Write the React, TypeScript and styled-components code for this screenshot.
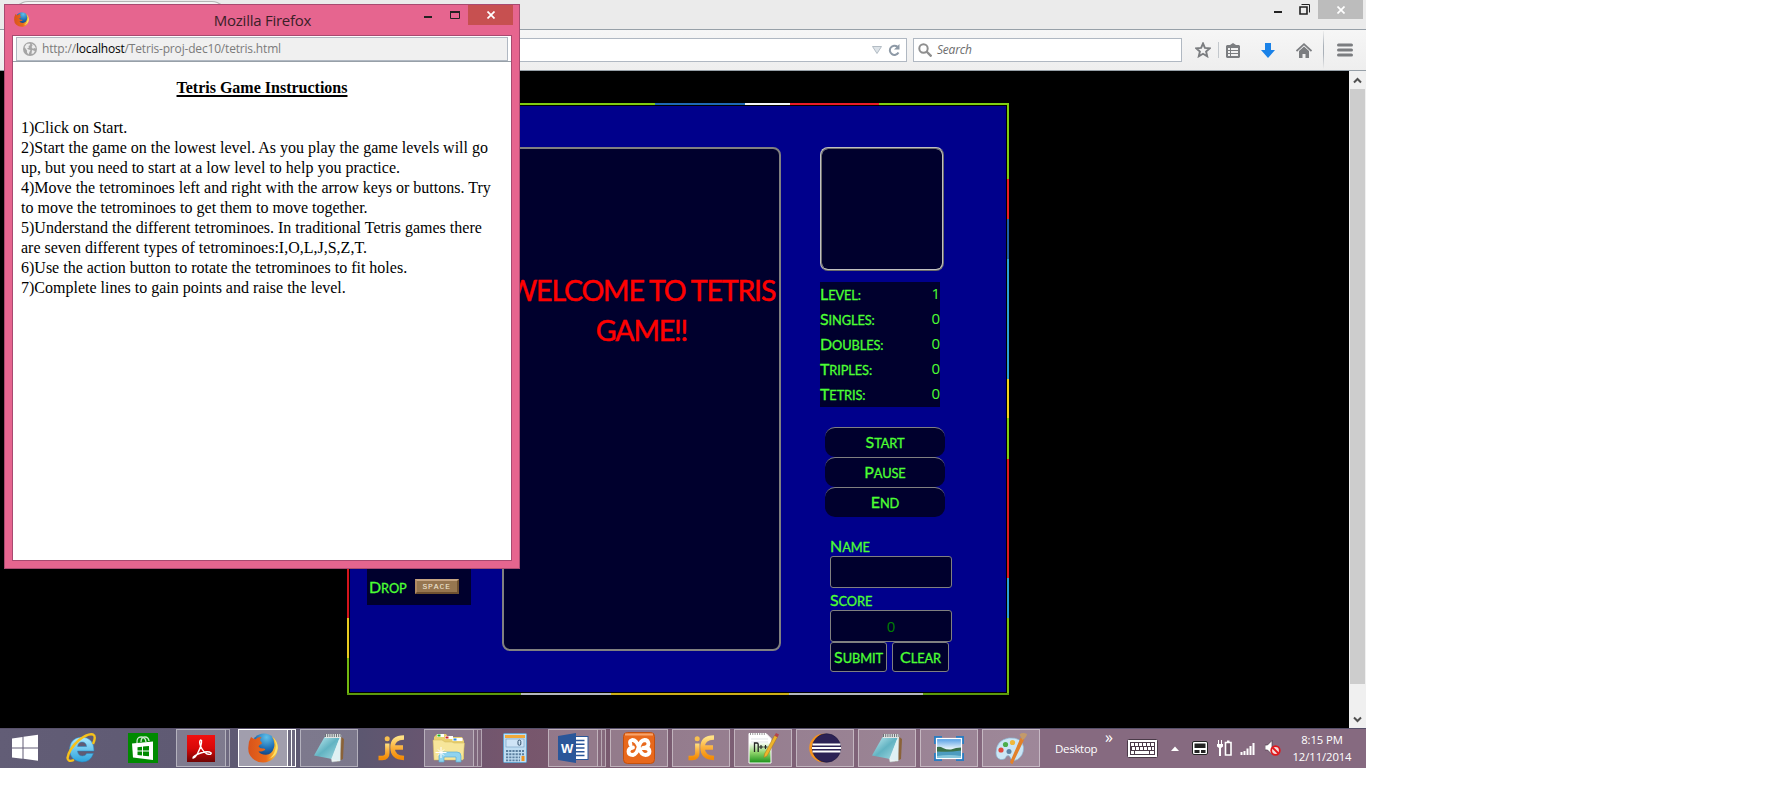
import React from "react";
import styled, { createGlobalStyle, css } from "styled-components";

const ui = `"Open Sans", "Noto Sans", sans-serif`;
const game = `Lato, "Open Sans", sans-serif`;
const navy = "#00008b";
const night = "#00002d";
const lime = "#4dff33";

const Global = createGlobalStyle`
  * { box-sizing: border-box; }
  html, body { margin: 0; background: #fff; overflow: hidden; }
  svg { display: block; flex: none; }
`;

const Screen = styled.div`
  position: relative;
  width: 1366px;
  height: 768px;
  display: flex;
  flex-direction: column;
  overflow: hidden;
  font-family: ${ui};
`;

/* ---------- browser chrome ---------- */
const TabStrip = styled.div`
  height: 30px;
  background: #ebebeb;
  border-bottom: 1px solid #97a0a8;
  display: flex;
  justify-content: space-between;
  flex: none;
`;
const Tab = styled.div`
  width: 212px;
  height: 29px;
  margin: 1px 0 0 14px;
  border: 1px solid #b4b4b4;
  border-bottom: 0;
  border-radius: 14px 14px 0 0;
  background: #f4f4f4;
`;
const Captions = styled.div`
  display: flex;
  height: 19px;
  margin-right: 3px;
`;
const CloseBox = styled.div<{ $live?: boolean }>`
  width: 45px;
  height: ${(p) => (p.$live ? 20 : 19)}px;
  background: ${(p) => (p.$live ? "#c75050" : "#bcbcbc")};
  display: flex;
  align-items: center;
  justify-content: center;
`;
const Toolbar = styled.div`
  height: 41px;
  flex: none;
  background: linear-gradient(#f6f6f6, #eeeeee);
  border-bottom: 1px solid #97a0a8;
  display: flex;
  align-items: center;
  padding-left: 40px;
`;
const Field = styled.div<{ $w: number }>`
  width: ${(p) => p.$w}px;
  height: 24px;
  margin-right: 6px;
  padding-left: 4px;
  border: 1px solid #b0b8c2;
  background: #fff;
  display: flex;
  align-items: center;
`;
const UrlIcons = styled.div`
  margin-left: auto;
  display: flex;
  align-items: center;
  gap: 6px;
  padding-right: 6px;
`;
const SearchHint = styled.span`
  font: italic 12px/22px ${ui};
  letter-spacing: -0.2px;
  color: #6d6d6d;
  margin-left: 5px;
`;
const Tools = styled.div`
  display: flex;
  align-items: center;
  margin-left: 7px;
  height: 100%;
`;
const Divider = styled.div<{ $h: number }>`
  width: 1px;
  height: ${(p) => p.$h}px;
  background: ${(p) => (p.$h > 20 ? "linear-gradient(#eee, #a9b0b8 40%, #a9b0b8 60%, #eee)" : "#c3c8cd")};
`;
const Slot = styled.div<{ $w: number; $top?: number }>`
  width: ${(p) => p.$w}px;
  padding-top: ${(p) => p.$top ?? 0}px;
  display: flex;
  justify-content: center;
`;

/* ---------- page ---------- */
const Viewport = styled.div`
  display: flex;
  height: 657px;
  flex: none;
  background: #000;
`;
const Page = styled.div`
  flex: 1;
  padding: 32px 0 0 347px;
`;
const Scrollbar = styled.div`
  width: 17px;
  background: #f0f0f0;
  display: flex;
  flex-direction: column;
  align-items: center;
`;
const Arrow = styled.div`
  height: 18px;
  display: flex;
  align-items: center;
`;
const Thumb = styled.div`
  width: 15px;
  height: 595px;
  background: #cdcdcd;
  margin-bottom: 26px;
`;

const Frame = styled.div`
  width: 662px;
  height: 592px;
  padding: 2px;
  background-repeat: no-repeat;
  background-image:
    linear-gradient(90deg, #80cc10 308px, #1e6ab5 308px 398px, #f4f6f6 398px 443px, #ec1c24 443px 532px, #80d010 532px),
    linear-gradient(90deg, #5c9a0c 174px, #b4b8bc 174px 264px, #ccae18 264px 442px, #b4b8bc 442px 576px, #5c9a0c 576px),
    linear-gradient(#80cc10 400px, #d4141c 400px 515px, #e8cc20 515px 555px, #72b810 555px),
    linear-gradient(#80cc10 76px, #ec1c24 76px 116px, #1e5fa5 116px 156px, #2a9fd6 156px 276px, #f2d21c 276px 315px, #80cc10 315px 356px, #e01820 356px 475px, #2a9fd6 475px 515px, #76be10 515px);
  background-size: 662px 2px, 662px 2px, 2px 592px, 2px 592px;
  background-position: 0 0, 0 590px, 0 0, 660px 0;
`;
const GameBox = styled.div`
  height: 588px;
  border: 1px solid #000;
  background: ${navy};
  display: flex;
  padding-top: 41px;
`;
const KeysColumn = styled.div`
  width: 152px;
  padding: 398px 0 0 17px;
`;
const KeysPanel = styled.div`
  width: 104px;
  height: 60px;
  padding: 30px 0 0 2px;
  background: ${night};
  display: flex;
  gap: 8px;
`;
const SpaceKey = styled.div`
  width: 44px;
  height: 15px;
  margin-top: 4px;
  border: 2px solid;
  border-color: #c6a582 #6f5130 #6f5130 #b08a62;
  background: #967650;
  color: #f3ead9;
  font: 8px/11px "Liberation Mono", monospace;
  letter-spacing: 0.9px;
  text-align: center;
`;
const Board = styled.div`
  width: 279px;
  height: 504px;
  border: 2px solid #808080;
  border-radius: 8px;
  background: ${night};
  padding-top: 121px;
  text-align: center;
`;
const Welcome = styled.div`
  color: #f00;
  font: 28.5px/40px ${game};
  letter-spacing: -1.15px;
  -webkit-text-stroke: 0.5px #f00;
  white-space: nowrap;
`;
const Side = styled.div`
  margin-left: 39px;
  width: 140px;
`;
const Preview = styled.div`
  width: 124px;
  height: 124px;
  border: 2px ridge #c0c0c0;
  border-radius: 8px;
  background: ${night};
`;
const Stats = styled.div`
  width: 120px;
  margin-top: 11px;
  background: ${night};
`;
const Stat = styled.div`
  height: 25px;
  display: flex;
  justify-content: space-between;
  color: ${lime};
  font: 15px/22px ${ui};
`;
const SmallCaps = styled.span`
  display: inline-block;
  font: 12.8px/23px ${game};
  color: ${lime};
  text-transform: uppercase;
  letter-spacing: -0.1px;
  -webkit-text-stroke: 0.3px ${lime};
  &::first-letter { font-size: 16px; }
`;
const Actions = styled.div`
  margin: 20px 0 0 5px;
  width: 120px;
`;
const button = css`
  display: flex;
  justify-content: center;
  height: 30px;
  background: ${night};
`;
const ActionButton = styled.div`
  ${button}
  border-top: 1px solid #808080;
  border-radius: 10px;
  padding-top: 2px;
`;
const Form = styled.div`
  margin: 17px 0 0 10px;
  width: 122px;
`;
const Label = styled.div`
  display: flex;
  align-items: flex-start;
  height: 22px;
`;
const Input = styled.div`
  height: 32px;
  border: 1px solid #808080;
  border-radius: 3px;
  background: ${night};
  color: #008000;
  font: 15px/31px ${ui};
  text-align: center;
`;
const FormButtons = styled.div`
  display: flex;
  gap: 5px;
`;
const FormButton = styled.div`
  ${button}
  width: 57px;
  border: 1px solid #808080;
  border-radius: 3px;
  padding-top: 2px;
`;

/* ---------- popup ---------- */
const Popup = styled.div`
  position: absolute;
  left: 4px;
  top: 4px;
  width: 516px;
  height: 565px;
  border: 1px solid #a84a70;
  background: #e6658f;
  padding: 0 7px 7px;
  display: flex;
  flex-direction: column;
`;
const TitleBar = styled.div`
  height: 30px;
  display: grid;
  grid-template-columns: 118px 1fr 118px;
  margin-right: -1px;
`;
const AppIcon = styled.div`
  padding: 7px 0 0 2px;
`;
const Title = styled.div`
  text-align: center;
  font: 15px/30px ${ui};
  color: #3a2028;
  letter-spacing: -0.25px;
`;
const PopCaptions = styled.div`
  display: flex;
  justify-content: flex-end;
`;
const PopBody = styled.div`
  flex: 1;
  border: 1px solid #a84a70;
  background: #fff;
`;
const PopUrlRow = styled.div`
  height: 26px;
  padding: 1px 3px 0;
  border-bottom: 1px solid #97a0a8;
`;
const PopUrl = styled.div`
  height: 24px;
  background: #f0f0f0;
  border: 1px solid #b0b8c2;
  display: flex;
  align-items: center;
  gap: 5px;
  padding-left: 6px;
  font: 12px/22px ${ui};
  letter-spacing: -0.18px;
  color: #7b7b7b;
  white-space: pre;
  b { font-weight: 400; color: #000; }
`;
const Instructions = styled.div`
  padding: 16px 8px 0;
  font: 16px/20px "Liberation Serif", serif;
  color: #000;
  white-space: nowrap;
`;
const Heading = styled.div`
  text-align: center;
  font-weight: bold;
  text-decoration: underline;
  text-decoration-thickness: 2px;
  text-underline-offset: 2px;
  margin-bottom: 20px;
`;

/* ---------- taskbar ---------- */
const Taskbar = styled.div`
  height: 40px;
  flex: none;
  display: flex;
  background: linear-gradient(90deg, #625d76 0, #5c5770 360px, #6a5570 440px, #77566c 520px, #795b70 640px, #866a80 1040px, #866a80 1366px);
  box-shadow: inset 0 1px #57506a;
`;
const StartSlot = styled.div`
  width: 52px;
  padding: 6px 0 0 11px;
`;
const TaskSlot = styled.div`
  width: 62px;
  display: flex;
  padding: 1px 4px 1px 0;
`;
const TaskFrame = styled.div<{ $on?: boolean; $bare?: boolean; $stack?: boolean }>`
  width: ${(p) => (p.$stack ? 50 : 58)}px;
  height: 38px;
  display: flex;
  align-items: center;
  justify-content: center;
  ${(p) =>
    !p.$bare &&
    css`
      border: 1px solid ${p.$on ? "#fff" : "rgba(255,255,255,.42)"};
      background: ${p.$on ? "rgba(255,255,255,.42)" : "rgba(255,255,255,.2)"};
    `}
`;
const StackEdge = styled.div<{ $on?: boolean }>`
  width: 4px;
  height: 38px;
  border: 1px solid ${(p) => (p.$on ? "#fff" : "rgba(255,255,255,.42)")};
  border-left: 0;
  background: rgba(255, 255, 255, 0.1);
`;
const Tray = styled.div`
  display: flex;
  align-items: center;
  color: #fff;
  font: 11.3px/17px ${ui};
  flex: 1;
  padding-left: 11px;
`;
const DesktopLabel = styled.div`
  width: 46px;
  font-size: 11.5px;
  letter-spacing: -0.3px;
`;
const More = styled.div`
  width: 26px;
  height: 38px;
  padding-left: 4px;
  font-size: 16px;
  line-height: 16px;
`;
const TrayItem = styled.div<{ $w: number }>`
  width: ${(p) => p.$w}px;
  flex: none;
`;
const Clock = styled.div`
  width: 72px;
  flex: none;
  text-align: center;
  letter-spacing: -0.1px;
`;

/* ---------- drawings ---------- */
const Minimize = ({ w = 8 }: { w?: number }) => (
  <svg width={w} height="3"><rect width={w} height="2" fill="#222" /></svg>
);
const Cross = () => (
  <svg width="8" height="8" viewBox="0 0 8 8"><path d="M.5 .5l7 7M7.5 .5l-7 7" stroke="#fff" strokeWidth="1.7" /></svg>
);
const Firefox = ({ s }: { s: number }) => (
  <svg width={s} height={s} viewBox="0 0 30 30">
    <defs>
      <radialGradient id="ffb" cx=".6" cy=".15" r=".9"><stop offset="0" stopColor="#5fc0ea" /><stop offset=".5" stopColor="#1f6fb5" /><stop offset="1" stopColor="#0b2660" /></radialGradient>
      <linearGradient id="ffo" x1="0" x2="1"><stop offset="0" stopColor="#d9531a" /><stop offset=".6" stopColor="#e8691c" /><stop offset="1" stopColor="#fbd53a" /></linearGradient>
    </defs>
    <circle cx="16" cy="13" r="12.5" fill="url(#ffb)" />
    <path d="M3 4Q0 9 .3 16A14.7 13.5 0 0 0 15 29.6C24 29.6 30 22.5 29.7 14 29.4 9 27 5.500 24 3.500Q27.500 9 26 14.500 24 21.500 18 21.800 12 21.800 10.500 18 13 19.200 16 17.600 18.500 16.300 16 15.400 12 16 10.500 13.500 11 11.500 13.500 11 14.500 9.200 12.300 8 11.500 6 13.500 4Q9.500 3.800 7.500 6.300 5 6 3 4Z" fill="url(#ffo)" />
    <path d="M24 3.500Q29.500 9 27.500 16 26 23 20 26.500 29 23 29.700 15 29.600 8 24 3.500Z" fill="#fde36a" />
  </svg>
);
const Globe = () => (
  <svg width="14" height="14" viewBox="0 0 14 14">
    <circle cx="7" cy="7" r="7" fill="#a5a5a5" />
    <path d="M1.500 5l2-3 3-.5 1 1.500-2 1 .5 1.500-2 1 1.500 1 2 .5-1 2-1 2.500-1.500-2 0-2zM8.500 1.500l3 2 1.500 3-2-.5-1 1-1.500-2 1-1.500zM9 8l3 1-1.500 2.500-2 .5z" fill="#ececec" />
  </svg>
);
const Windows = () => (
  <svg width="28" height="28" viewBox="0 0 28 28" fill="#fff">
    <path d="M1 4.500L11.500 3v10.400H1zM12.500 2.800L27 .8v12.600H12.500zM1 14.400h10.500v10.400L1 23.400zM12.500 14.400H27v12.400l-14.500-2z" />
  </svg>
);
const Explorer = () => (
  <svg width="32" height="32" viewBox="0 0 32 32">
    <defs><linearGradient id="ie" x2="0" y2="1"><stop stopColor="#aeeaff" /><stop offset="1" stopColor="#2ba3dd" /></linearGradient></defs>
    <path d="M29 19H12.500q.6 5 5 5 3 0 4.200-2.500h6.700Q25.500 30 17 30 5 29 4.500 17.500 5 6 16.500 5 29 5.500 29 19zM12.600 14.500h9q-.5-4.500-4.600-4.500-3.800 0-4.400 4.500z" fill="url(#ie)" stroke="#2389c4" strokeWidth=".5" />
    <path d="M28 12Q31.500 4 28 2.500 23 1 14 8 4 17 2.500 26q.3 4.500 6.500 2" fill="none" stroke="#f6c21c" strokeWidth="2.400" />
  </svg>
);
const Store = () => (
  <svg width="30" height="30" viewBox="0 0 30 30">
    <rect width="30" height="30" fill="#008a00" />
    <path d="M9 10Q8.500 4 13 4t5 5M13 9q0-5 4-5 3.500 0 4 4" fill="none" stroke="#cfe8cf" strokeWidth="1.300" />
    <path d="M4 10.500L25 8.500V27L5 24.500z" fill="#fff" />
    <path d="M9.500 14.200l4.500-.5v3.800H9.500zM15 13.600l6-.6v4.500h-6zM9.500 18.500H14v4l-4.500-.4zM15 18.500h6v4.800l-6-.6z" fill="#008a00" />
  </svg>
);
const Acrobat = () => (
  <svg width="28" height="27" viewBox="0 0 28 27">
    <defs><linearGradient id="ac" x2="0" y2="1"><stop stopColor="#f11010" /><stop offset=".5" stopColor="#d80808" /><stop offset="1" stopColor="#6f0404" /></linearGradient></defs>
    <rect width="28" height="27" fill="url(#ac)" />
    <path d="M13.500 5q-1.800 1.500.2 6.500 2.500 5.500 6.500 7.500 4.500 1 4-1-3-2.500-10.500 0Q6 21 6 23q1.800.4 4.500-4.500Q15 10 14.500 5.500z" fill="none" stroke="#fff" strokeWidth="1.400" />
  </svg>
);
const Notepad = () => (
  <svg width="32" height="30" viewBox="0 0 32 30">
    <defs><linearGradient id="np" x2="1" y2="1"><stop stopColor="#c8eff4" /><stop offset=".5" stopColor="#62b3c2" /><stop offset="1" stopColor="#a4dbe3" /></linearGradient></defs>
    <path d="M27 3l4 3-1 20-6 3z" fill="#8a6238" />
    <path d="M12 2h16l-1 26-8 1z" fill="#eef4f4" stroke="#b9c6c8" strokeWidth=".5" />
    <path d="M11.500 4H27L19 26 1 22.500z" fill="url(#np)" />
    <path d="M26.500 5l.8 23-9-2z" fill="#dff1f3" />
    <path d="M12 3h16" stroke="#dfe3e3" strokeWidth="4" />
    <path d="M12 2.500h16" stroke="#6a7073" strokeWidth="3" strokeDasharray="1 1.200" />
  </svg>
);
const JEdit = () => (
  <svg width="28" height="28" viewBox="0 0 28 28">
    <defs><linearGradient id="je" x2="0" y2="1"><stop stopColor="#ffe184" /><stop offset=".5" stopColor="#fbb03b" /><stop offset="1" stopColor="#f48c06" /></linearGradient></defs>
    <g fill="none" stroke="url(#je)" strokeWidth="4.400">
      <path d="M10.300 9.500V19q0 5-5 5H1.500" />
      <path d="M27 3.500q-11.500 0-11.500 10T27 24M14 13.500h12" />
    </g>
    <circle cx="10.200" cy="4.800" r="2.500" fill="#f8c050" />
  </svg>
);
const Folders = () => (
  <svg width="34" height="30" viewBox="0 0 34 30">
    <path d="M2 4L5 1h9l2 3h14l2 4v18H2z" fill="#e9cf6e" />
    <rect x="5" y="1" width="7" height="3" fill="#fff" /><rect x="5.500" y="1.500" width="3" height="2" fill="#1db21d" />
    <rect x="13" y="3" width="8" height="3" fill="#fff" /><rect x="13.500" y="3.500" width="3" height="2" fill="#d02a2a" />
    <rect x="20.500" y="5" width="10" height="3" fill="#fff" /><rect x="21.500" y="5.500" width="3" height="2" fill="#2a8ae0" />
    <path d="M1 7h9l3 2h7l2 1h10.500L31 27H2z" fill="#f7e69a" stroke="#cdb45a" strokeWidth=".5" />
    <path d="M7 29v-6q0-4 4-4h14q4 0 4 4v6h-5v-5H12v5z" fill="#8fd3ee" stroke="#5aaed2" strokeWidth=".7" />
    <path d="M9 14v11M3.500 19.500h11M6 16.500l6 6M12 16.500l-6 6" stroke="#fff" strokeWidth="1" />
  </svg>
);
const Calculator = () => (
  <svg width="24" height="30" viewBox="0 0 24 30">
    <rect x=".5" y=".5" width="23" height="29" rx="1" fill="#c0ddf2" stroke="#65a3cf" />
    <rect x="2" y="2" width="20" height="3" fill="#f0a93a" />
    <rect x="3" y="6" width="18" height="8" fill="#cfe4f6" stroke="#6f99c0" strokeWidth=".6" />
    <rect x="15" y="7.200" width="2.800" height="5" rx="1.200" fill="none" stroke="#36536e" />
    <path d="M3 18h18M3 21.200h18M3 24.400h14M3 27.400h14" stroke="#5b7f9f" strokeWidth="1.900" strokeDasharray="2.200 1" />
    <rect x="18.500" y="23" width="3" height="5" fill="#f0941e" />
  </svg>
);
const WordGlyph = styled.text`
  font: bold 13px "Liberation Sans", sans-serif;
  fill: #fff;
`;
const Word = () => (
  <svg width="31" height="30" viewBox="0 0 31 30">
    <rect x="14" y="3.500" width="16" height="23" fill="#fff" stroke="#2a5699" />
    <path d="M18 7.500h8.500M18 11.200h8.500M18 15h8.500M18 18.700h8.500M18 22.500h8.500" stroke="#2a5699" strokeWidth="1.400" />
    <path d="M0 3L18 0v30L0 27z" fill="#2a5699" />
    <WordGlyph x="3" y="19.500">W</WordGlyph>
  </svg>
);
const Xampp = () => (
  <svg width="32" height="32" viewBox="0 0 32 32">
    <rect x=".5" y=".5" width="31" height="31" rx="4" fill="#e8681c" stroke="#c2500e" />
    <path d="M2 2.500h28" stroke="#f7a46c" strokeWidth="2" />
    <g fill="none" stroke="#fff" strokeWidth="3.800" strokeLinecap="round" strokeLinejoin="round">
      <path d="M7.500 12.500Q6 8.500 9 8q4.500-.3 7 7.500 2 7.500 6.500 7.500 4-.3 4-3.500 0-3.500-4.500-3.500h-2q5.500-.5 5.500-4.500Q25 8 21.500 8q-4 .2-6 7.500-2 7-5.500 7.500-4.500 0-4.500-3.500 0-3.300 4.500-4" />
    </g>
  </svg>
);
const NotepadPlus = () => (
  <svg width="31" height="32" viewBox="0 0 31 32">
    <defs><linearGradient id="npp" x2="0" y2="1"><stop offset=".3" stopColor="#fff" /><stop offset=".65" stopColor="#8ed36a" /><stop offset="1" stopColor="#189018" /></linearGradient></defs>
    <path d="M1 1.500h17l5 5V31H1z" fill="url(#npp)" stroke="#fff" />
    <path d="M2 2h16" stroke="#999" strokeWidth="2" strokeDasharray="1 1.300" />
    <path d="M3 7h17M3 10h17" stroke="#d5d9dd" strokeWidth=".7" />
    <path d="M6.500 20v-9h2.500q1.200 0 1.200 1.500V20" fill="none" stroke="#222" strokeWidth="1.300" />
    <path d="M11 15h4M13 13v4M15.500 15h4M17.500 13v4" stroke="#222" strokeWidth="1.100" />
    <path d="M26.500 3.500l3 1.500L19 24l-3 1.500.500-3.500z" fill="#efb52c" stroke="#a8721a" strokeWidth=".5" />
    <path d="M26.500 3.500L28 1l3 1.500-1.500 2.700z" fill="#b4444c" />
  </svg>
);
const Eclipse = () => (
  <svg width="32" height="30" viewBox="0 0 32 30">
    <circle cx="14.500" cy="15" r="14.300" fill="#f7941e" />
    <circle cx="17.500" cy="15" r="14.300" fill="#2c2255" stroke="#1b153c" strokeWidth=".6" />
    <path d="M3.500 11.500h28M3 15h29M3.500 18.500h28" stroke="#fff" strokeWidth="1.800" />
  </svg>
);
const Photos = () => (
  <svg width="30" height="25" viewBox="0 0 30 25">
    <defs><linearGradient id="ph" x2="0" y2="1"><stop stopColor="#4e9ae4" /><stop offset=".5" stopColor="#e2f1fa" /></linearGradient></defs>
    <path d="M0 0h8v3H3v5H0zM22 0h8v8h-3V3h-5zM0 17h3v5h5v3H0zM27 17h3v8h-8v-3h5z" fill="#2d7cc0" />
    <rect x="2.500" y="2.500" width="25" height="20" fill="url(#ph)" stroke="#fff" strokeWidth="1.200" />
    <path d="M3 15q12 1 24-2v9H3z" fill="#4c9cc0" />
    <path d="M3 11q3-1 6 1 4 2 8 1.500 5-2 10-2v3q-12 2-24 1z" fill="#3a7048" />
    <path d="M3 20q12-2 24 0v2H3z" fill="#86c6dc" />
  </svg>
);
const Paint = () => (
  <svg width="32" height="32" viewBox="0 0 32 32">
    <path d="M1 21Q1 8 14 6q13-1 14.500 9 .5 8-6 12.500-6 2.500-7-1.500-1-3.500-4-2-1 4-6 3.500Q1 26 1 21z" fill="#cbe6f5" stroke="#8cb8d4" strokeWidth=".7" />
    <circle cx="6" cy="18" r="2.600" fill="#e24a3c" /><circle cx="10.500" cy="12.500" r="2.600" fill="#4cae4c" />
    <circle cx="17.500" cy="10.500" r="2.600" fill="#f0b83a" /><circle cx="14" cy="19.500" r="2.500" fill="#5b84a6" />
    <path d="M26 7l2 1-11 23-1-1z" stroke="#e2812a" strokeWidth="1.800" fill="#e2812a" />
    <path d="M24.500 2.500q3-2.500 7.500-.500-.500 3.500-4.500 6z" fill="#c39a6a" />
  </svg>
);

const Task = ({ on, bare, stack, children }: { on?: boolean; bare?: boolean; stack?: number; children: React.ReactNode }) => (
  <TaskSlot>
    <TaskFrame $on={on} $bare={bare} $stack={!!stack}>{children}</TaskFrame>
    {Array.from({ length: stack ?? 0 }, (_, i) => <StackEdge key={i} $on={on} />)}
  </TaskSlot>
);

const stats: [string, number][] = [["Level:", 1], ["Singles:", 0], ["Doubles:", 0], ["Triples:", 0], ["Tetris:", 0]];
const steps = [
  "1)Click on Start.",
  "2)Start the game on the lowest level. As you play the game levels will go",
  "up, but you need to start at a low level to help you practice.",
  "4)Move the tetrominoes left and right with the arrow keys or buttons. Try",
  "to move the tetrominoes to get them to move together.",
  "5)Understand the different tetrominoes. In traditional Tetris games there",
  "are seven different types of tetrominoes:I,O,L,J,S,Z,T.",
  "6)Use the action button to rotate the tetrominoes to fit holes.",
  "7)Complete lines to gain points and raise the level.",
];

export default function App() {
  return (
    <Screen>
      <Global />
      <TabStrip>
        <Tab />
        <Captions>
          <Slot $w={24} $top={11}><Minimize /></Slot>
          <Slot $w={28} $top={4}>
            <svg width="11" height="11" viewBox="0 0 11 11" fill="none" stroke="#222"><path d="M2.500 .5h8v8" /><path d="M1 3h7v7H1z" strokeWidth="1.600" /></svg>
          </Slot>
          <CloseBox><Cross /></CloseBox>
        </Captions>
      </TabStrip>
      <Toolbar>
        <Field $w={867}>
          <UrlIcons>
            <svg width="10" height="8" viewBox="0 0 10 8"><path d="M.5 .5h9L5 7.500z" fill="#dde3e8" stroke="#b3bcc4" /></svg>
            <svg width="12" height="12" viewBox="0 0 12 12"><path d="M10.500 8.500A4.600 4.600 0 1 1 9.500 2.800" fill="none" stroke="#8d99a6" strokeWidth="2" /><path d="M11.500 0v5.500H6z" fill="#8d99a6" /></svg>
          </UrlIcons>
        </Field>
        <Field $w={269}>
          <svg width="14" height="14" viewBox="0 0 14 14"><circle cx="5.500" cy="5.500" r="4.200" fill="none" stroke="#8f8f8f" strokeWidth="2" /><path d="M8.500 8.500l5 5" stroke="#8f8f8f" strokeWidth="2.400" /></svg>
          <SearchHint>Search</SearchHint>
        </Field>
        <Tools>
          <Slot $w={16}>
            <svg width="16" height="16" viewBox="0 0 16 16"><path d="M8 1.500l1.900 4.400 4.800.4-3.600 3.200 1.100 4.800L8 11.800l-4.200 2.500 1.100-4.800L1.300 6.300l4.800-.4z" fill="none" stroke="#7b7d80" strokeWidth="1.900" /></svg>
          </Slot>
          <Slot $w={14}><Divider $h={16} /></Slot>
          <Slot $w={16}>
            <svg width="14" height="15" viewBox="0 0 14 15"><path d="M1 2h3l3-2 3 2h3l1 1v11l-1 1H1l-1-1V3z" fill="#7b7d80" /><path d="M2 5h2v2H2zM5 5h7v2H5zM2 8h2v2H2zM5 8h7v2H5zM2 11h2v2H2zM5 11h7v2H5z" fill="#f2f2f2" /></svg>
          </Slot>
          <Slot $w={54}>
            <svg width="14" height="15" viewBox="0 0 14 15"><path d="M4 0h6v7h4l-7 8-7-8h4z" fill="#1a82e8" /></svg>
          </Slot>
          <Slot $w={18}>
            <svg width="16" height="15" viewBox="0 0 16 15"><path d="M.5 8L8 1.200 15.500 8" fill="none" stroke="#7b7d80" strokeWidth="1.700" /><path d="M3 8l5-4.500L13 8v7H9.500v-4h-3v4H3z" fill="#7b7d80" /></svg>
          </Slot>
          <Slot $w={20}><Divider $h={38} /></Slot>
          <Slot $w={24}>
            <svg width="16" height="14" viewBox="0 0 16 14"><path d="M1.500 2h13M1.500 7h13M1.500 12h13" stroke="#7b7d80" strokeWidth="3" strokeLinecap="round" /></svg>
          </Slot>
        </Tools>
      </Toolbar>
      <Viewport>
        <Page>
          <Frame>
            <GameBox>
              <KeysColumn>
                <KeysPanel>
                  <SmallCaps>Drop</SmallCaps>
                  <SpaceKey>SPACE</SpaceKey>
                </KeysPanel>
              </KeysColumn>
              <Board>
                <Welcome>WELCOME TO TETRIS<br />GAME!!</Welcome>
              </Board>
              <Side>
                <Preview />
                <Stats>
                  {stats.map(([k, v]) => <Stat key={k}><SmallCaps>{k}</SmallCaps><span>{v}</span></Stat>)}
                </Stats>
                <Actions>
                  {["Start", "Pause", "End"].map((t) => <ActionButton key={t}><SmallCaps>{t}</SmallCaps></ActionButton>)}
                </Actions>
                <Form>
                  <Label><SmallCaps>Name</SmallCaps></Label>
                  <Input />
                  <Label><SmallCaps>Score</SmallCaps></Label>
                  <Input>0</Input>
                  <FormButtons>
                    <FormButton><SmallCaps>Submit</SmallCaps></FormButton>
                    <FormButton><SmallCaps>Clear</SmallCaps></FormButton>
                  </FormButtons>
                </Form>
              </Side>
            </GameBox>
          </Frame>
        </Page>
        <Scrollbar>
          <Arrow><svg width="9" height="7" viewBox="0 0 9 7"><path d="M1 5.500l3.500-3.500L8 5.500" fill="none" stroke="#505050" strokeWidth="2" /></svg></Arrow>
          <Thumb />
          <Arrow><svg width="9" height="7" viewBox="0 0 9 7"><path d="M1 1.500L4.500 5 8 1.500" fill="none" stroke="#505050" strokeWidth="2" /></svg></Arrow>
        </Scrollbar>
      </Viewport>
      <Taskbar>
        <StartSlot><Windows /></StartSlot>
        <Task bare><Explorer /></Task>
        <Task bare><Store /></Task>
        <Task stack={1}><Acrobat /></Task>
        <Task on stack={2}><Firefox s={30} /></Task>
        <Task><Notepad /></Task>
        <Task bare><JEdit /></Task>
        <Task stack={2}><Folders /></Task>
        <Task bare><Calculator /></Task>
        <Task stack={2}><Word /></Task>
        <Task><Xampp /></Task>
        <Task><JEdit /></Task>
        <Task><NotepadPlus /></Task>
        <Task><Eclipse /></Task>
        <Task><Notepad /></Task>
        <Task><Photos /></Task>
        <Task><Paint /></Task>
        <Tray>
          <DesktopLabel>Desktop</DesktopLabel>
          <More>»</More>
          <TrayItem $w={44}>
            <svg width="31" height="19" viewBox="0 0 31 19">
              <rect x=".5" y=".5" width="30" height="18" rx="1" fill="#fff" stroke="#4a3a48" />
              <rect x="3" y="3" width="25" height="13" fill="#4a3a48" />
              <path d="M4 5.500h23M5 9.500h22" stroke="#fff" strokeWidth="3" strokeDasharray="3 1" />
              <path d="M4 13.500h3M8 13.500h14M23 13.500h4" stroke="#fff" strokeWidth="3" />
            </svg>
          </TrayItem>
          <TrayItem $w={21}><svg width="8" height="5" viewBox="0 0 8 5"><path d="M0 5L4 .5 8 5z" fill="#fff" /></svg></TrayItem>
          <TrayItem $w={25}>
            <svg width="16" height="14" viewBox="0 0 16 14"><rect x=".5" y=".5" width="15" height="13" rx="1.500" fill="#fff" stroke="#222" /><path d="M2.500 2.500h11v4.500h-11zM2.500 9h5v3h-5zM9 9h4.500v3H9z" fill="#222" /></svg>
          </TrayItem>
          <TrayItem $w={23}>
            <svg width="16" height="16" viewBox="0 0 16 16"><path d="M1.500 0v4M4.500 0v4" stroke="#fff" strokeWidth="1" /><path d="M0 4h6v2.500L4 8v8H2V8L0 6.500z" fill="#fff" /><path d="M8.500 2.500h5.500v12.500H8.500zM10 1.200h2.500" fill="#6e5769" stroke="#fff" strokeWidth="1.600" /></svg>
          </TrayItem>
          <TrayItem $w={25}>
            <svg width="16" height="13" viewBox="0 0 16 13"><path d="M1.500 13v-3M4.500 13V9M7.500 13V6.500M10.500 13V4M13.500 13V1" stroke="#fff" strokeWidth="2" /></svg>
          </TrayItem>
          <TrayItem $w={21}>
            <svg width="16" height="16" viewBox="0 0 16 16"><path d="M0 5h2.500L7 .5v14L2.500 10H0z" fill="#fff" stroke="#4a3a48" strokeWidth=".7" /><circle cx="10.500" cy="10.500" r="4.300" fill="#f7dada" stroke="#e0181c" strokeWidth="1.800" /><path d="M7.500 7.500l6 6" stroke="#e0181c" strokeWidth="1.800" /></svg>
          </TrayItem>
          <Clock>8:15 PM<br />12/11/2014</Clock>
        </Tray>
      </Taskbar>

      <Popup>
        <TitleBar>
          <AppIcon><Firefox s={15} /></AppIcon>
          <Title>Mozilla Firefox</Title>
          <PopCaptions>
            <Slot $w={28} $top={11}><Minimize /></Slot>
            <Slot $w={26} $top={6}><svg width="10" height="8" viewBox="0 0 10 8"><path d="M.5 1h9v6.500h-9z" fill="none" stroke="#222" /><path d="M0 1h10" stroke="#222" strokeWidth="2" /></svg></Slot>
            <CloseBox $live><Cross /></CloseBox>
          </PopCaptions>
        </TitleBar>
        <PopBody>
          <PopUrlRow>
            <PopUrl><Globe /><span>http://<b>localhost</b>/Tetris-proj-dec10/tetris.html</span></PopUrl>
          </PopUrlRow>
          <Instructions>
            <Heading>Tetris Game Instructions</Heading>
            {steps.map((s) => <div key={s}>{s}</div>)}
          </Instructions>
        </PopBody>
      </Popup>
    </Screen>
  );
}
